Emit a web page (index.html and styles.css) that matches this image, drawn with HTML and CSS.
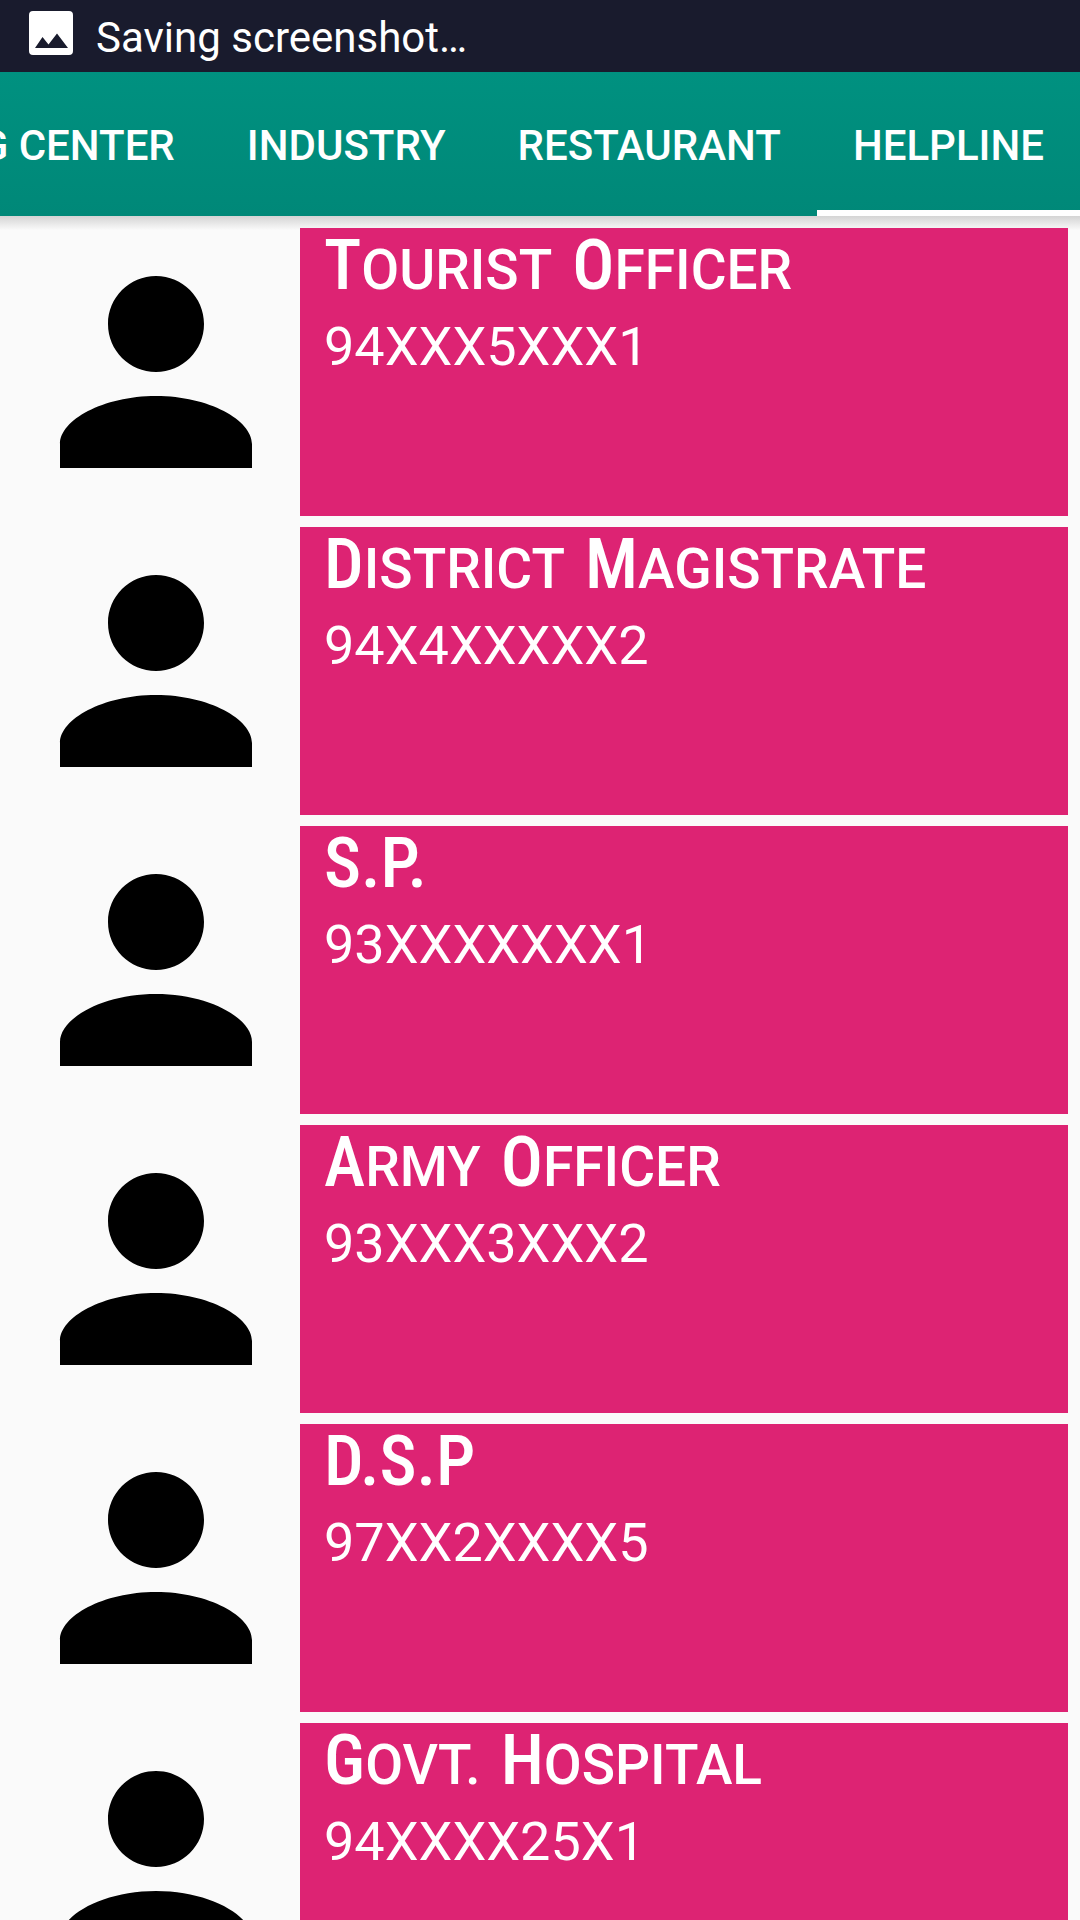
FILE: index.html
```html
<!DOCTYPE html>
<html lang="en">
<head>
<meta charset="utf-8">
<meta name="viewport" content="width=device-width, initial-scale=1">
<title>Helpline</title>
<link rel="stylesheet" href="styles.css">
</head>
<body>
<svg class="symbols" aria-hidden="true">
  <symbol id="person" viewBox="0 0 24 24"><path d="M12 12c2.210 0 4-1.790 4-4s-1.790-4-4-4-4 1.790-4 4 1.790 4 4 4zm0 2c-4.420 0-8 2.010-8 4v2h16v-2c0-1.990-3.580-4-8-4z"/></symbol>
</svg>
<div class="app">
  <div class="status" role="status">
    <svg class="status-icon" viewBox="0 0 44 44" aria-hidden="true"><path fill="#fff" fill-rule="evenodd" d="M4 0h36a4 4 0 0 1 4 4v36a4 4 0 0 1-4 4H4a4 4 0 0 1-4-4V4a4 4 0 0 1 4-4zM6 37h33L28 22.500 19.500 33.500 13.500 26z"/></svg>
    <span>Saving screenshot…</span>
  </div>
  <nav class="tabs">
    <a href="#shopping">Shopping Center</a>
    <a href="#industry">Industry</a>
    <a href="#restaurant">Restaurant</a>
    <a href="#helpline" class="active" aria-current="page">Helpline</a>
  </nav>
  <main class="list">
    <article class="row">
      <svg class="avatar" aria-hidden="true"><use href="#person"/></svg>
      <div class="card"><h2><span>Tourist</span> <span>Officer</span></h2><p>94XXX5XXX1</p></div>
    </article>
    <article class="row">
      <svg class="avatar" aria-hidden="true"><use href="#person"/></svg>
      <div class="card"><h2><span>District</span> <span>Magistrate</span></h2><p>94X4XXXXX2</p></div>
    </article>
    <article class="row">
      <svg class="avatar" aria-hidden="true"><use href="#person"/></svg>
      <div class="card"><h2>S.P.</h2><p>93XXXXXXX1</p></div>
    </article>
    <article class="row">
      <svg class="avatar" aria-hidden="true"><use href="#person"/></svg>
      <div class="card"><h2><span>Army</span> <span>Officer</span></h2><p>93XXX3XXX2</p></div>
    </article>
    <article class="row">
      <svg class="avatar" aria-hidden="true"><use href="#person"/></svg>
      <div class="card"><h2>D.S.P</h2><p>97XX2XXXX5</p></div>
    </article>
    <article class="row">
      <svg class="avatar" aria-hidden="true"><use href="#person"/></svg>
      <div class="card"><h2><span>Govt.</span> <span>Hospital</span></h2><p>94XXXX25X1</p></div>
    </article>
  </main>
</div>
</body>
</html>
```

FILE: styles.css
```css
* {
  box-sizing: border-box;
}

body {
  margin: 0;
  background: #fafafa;
  color: #fff;
  font-family: Roboto, sans-serif;
}

.symbols {
  display: none;
}

.app {
  display: flex;
  flex-direction: column;
  height: 100vh;
}

.status {
  display: flex;
  flex: none;
  gap: 23px;
  height: 72px;
  padding: 11px 29px;
  background: #191b2d;
  font-size: 42px;
  line-height: 54px;
}

.status-icon {
  width: 44px;
  height: 44px;
}

.tabs {
  display: flex;
  flex: none;
  justify-content: flex-end;
  height: 144px;
  overflow: hidden;
  background: linear-gradient(#009180, #008878);
}

.tabs a {
  flex: none;
  padding: 0 36px;
  border-bottom: 6px solid transparent;
  color: #fff;
  font-size: 42px;
  font-weight: 500;
  line-height: 148px;
  text-decoration: none;
  text-transform: uppercase;
}

.tabs .active {
  border-color: #fff;
}

.list {
  display: flex;
  flex: 1;
  flex-direction: column;
  gap: 11px;
  min-height: 0;
  padding: 12px;
  overflow-y: auto;
  scrollbar-width: none;
  background: linear-gradient(#d4d4d4, #fafafa 14px);
}

.row {
  display: flex;
  flex: none;
}

.avatar {
  flex: none;
  width: 288px;
  height: 288px;
}

.card {
  flex: 1;
  padding: 0 24px;
  background: #dd2373;
}

h2 {
  height: 74px;
  margin: 0;
  font-family: "Roboto Condensed", Roboto, sans-serif;
  font-size: 70px;
  font-weight: 500;
  line-height: 74px;
  text-transform: uppercase;
}

h2 span {
  display: inline-block;
  font-family: Roboto, sans-serif;
  font-size: 55px;
  line-height: 1;
}

h2 span + span {
  margin-left: 4px;
}

h2 span::first-letter {
  font-family: "Roboto Condensed", Roboto, sans-serif;
  font-size: 70px;
}

.card p {
  margin: 7px 0 0;
  font-size: 54px;
  line-height: 76px;
}
```
